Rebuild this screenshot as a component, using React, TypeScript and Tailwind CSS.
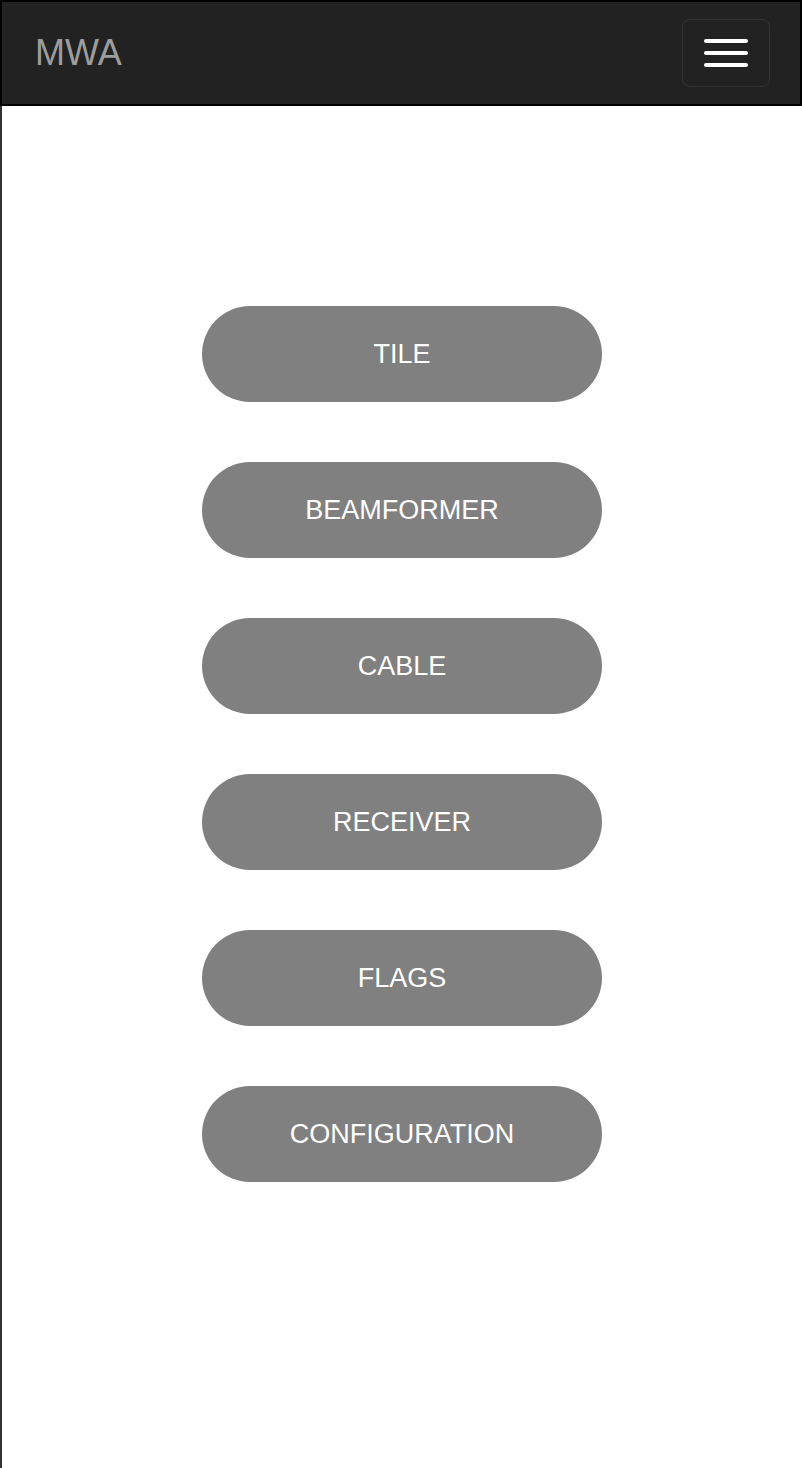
const sections = ["TILE", "BEAMFORMER", "CABLE", "RECEIVER", "FLAGS", "CONFIGURATION"];

export default function App() {
  return (
    <div className="min-h-[1468px] w-[802px] bg-white font-['Liberation_Sans',Arial,sans-serif]">
      <nav className="flex h-[106px] items-center justify-between border-2 border-black bg-[#222] pl-[33px] pr-[30px]">
        <span className="text-[36px] leading-none text-[#9d9d9d]">MWA</span>
        <button
          type="button"
          aria-label="Toggle navigation"
          className="flex h-[68px] w-[88px] flex-col items-center justify-center gap-[8px] rounded-[8px] border border-[#333]"
        >
          <span className="block h-[4px] w-[44px] rounded-full bg-white" />
          <span className="block h-[4px] w-[44px] rounded-full bg-white" />
          <span className="block h-[4px] w-[44px] rounded-full bg-white" />
        </button>
      </nav>
      <main className="flex min-h-[1362px] flex-col items-center gap-[60px] border-l-2 border-[#333] pt-[200px]">
        {sections.map((s) => (
          <button
            key={s}
            type="button"
            className="flex h-[96px] w-[400px] items-center justify-center rounded-full bg-[#808080] text-[27px] text-white"
          >
            {s}
          </button>
        ))}
      </main>
    </div>
  );
}
